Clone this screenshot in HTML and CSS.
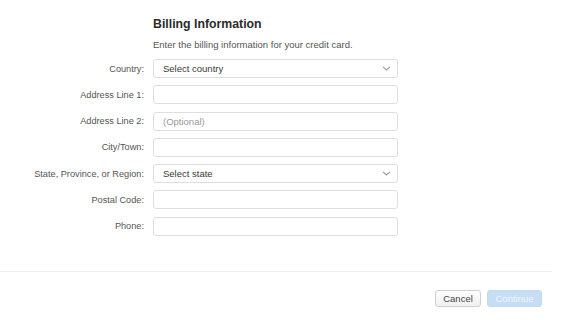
FILE: index.html
```html
<!DOCTYPE html>
<html lang="en">

<head>
  <meta charset="UTF-8">
  <title>Billing Information</title>
  <link rel="stylesheet" href="styles.css">
</head>

<body>
  <div class="billing">
    <h1>Billing Information</h1>
    <p class="intro">Enter the billing information for your credit card.</p>

    <form class="billingForm">
      <label class="fieldLabel">Country:</label>
      <div class="field select">
        <span>Select country</span>
        <svg class="chevron" width="9" height="5" viewBox="0 0 9 5"><path d="M1 0.8 L4.5 4 L8 0.8" fill="none" stroke="#8d9db3" stroke-width="1.1"/></svg>
      </div>

      <label class="fieldLabel">Address Line 1:</label>
      <div class="field"></div>

      <label class="fieldLabel">Address Line 2:</label>
      <div class="field"><span class="placeholder">(Optional)</span></div>

      <label class="fieldLabel">City/Town:</label>
      <div class="field"></div>

      <label class="fieldLabel">State, Province, or Region:</label>
      <div class="field select">
        <span>Select state</span>
        <svg class="chevron" width="9" height="5" viewBox="0 0 9 5"><path d="M1 0.8 L4.5 4 L8 0.8" fill="none" stroke="#8d9db3" stroke-width="1.1"/></svg>
      </div>

      <label class="fieldLabel">Postal Code:</label>
      <div class="field"></div>

      <label class="fieldLabel">Phone:</label>
      <div class="field"></div>
    </form>
  </div>

  <div class="divider"></div>

  <div class="actions">
    <button class="btn cancel">Cancel</button>
    <button class="btn continue">Continue</button>
  </div>
</body>

</html>
```
FILE: styles.css
```css
body {
  margin: 0;
  background-color: #ffffff;
  font-family: "Liberation Sans", Arial, sans-serif;
  color: #333;
}

.billing {
  padding-top: 16px;
}

.billing h1 {
  margin: 0 0 0 153px;
  font-size: 12.3px;
  line-height: 16px;
  font-weight: bold;
  color: #2b2b2b;
}

.intro {
  margin: 7px 0 8px 153px;
  font-size: 9.5px;
  line-height: 12px;
  color: #555;
}

.billingForm {
  display: grid;
  grid-template-columns: 144px 245px;
  column-gap: 9px;
  row-gap: 7.3px;
}

.fieldLabel {
  align-self: center;
  text-align: right;
  font-size: 9.2px;
  color: #555;
}

.field {
  height: 17px;
  border: 1px solid #dedede;
  border-radius: 3px;
  background-color: #fff;
  display: flex;
  align-items: center;
  justify-content: space-between;
  padding: 0 5px 0 9px;
  font-size: 9.5px;
  color: #333;
}

.select span {
  font-weight: 500;
  color: #3a3a3a;
}

.placeholder {
  color: #9a9a9a;
}

.chevron {
  margin-right: 1px;
}

.divider {
  height: 1px;
  margin: 35px 25px 0 0;
  background-color: #f1f1f1;
}

.actions {
  display: flex;
  justify-content: flex-end;
  gap: 6px;
  padding: 18px 35px 0 0;
}

.btn {
  height: 17px;
  padding: 0;
  border-radius: 3px;
  font-family: "Liberation Sans", Arial, sans-serif;
  font-size: 9.5px;
}

.cancel {
  width: 46px;
  border: 1px solid #d0d0d0;
  background: linear-gradient(#ffffff, #f0f0f0);
  color: #444;
}

.continue {
  width: 55px;
  border: 1px solid #c2daf0;
  background-color: #c6def3;
  color: #eef5fc;
}
```
